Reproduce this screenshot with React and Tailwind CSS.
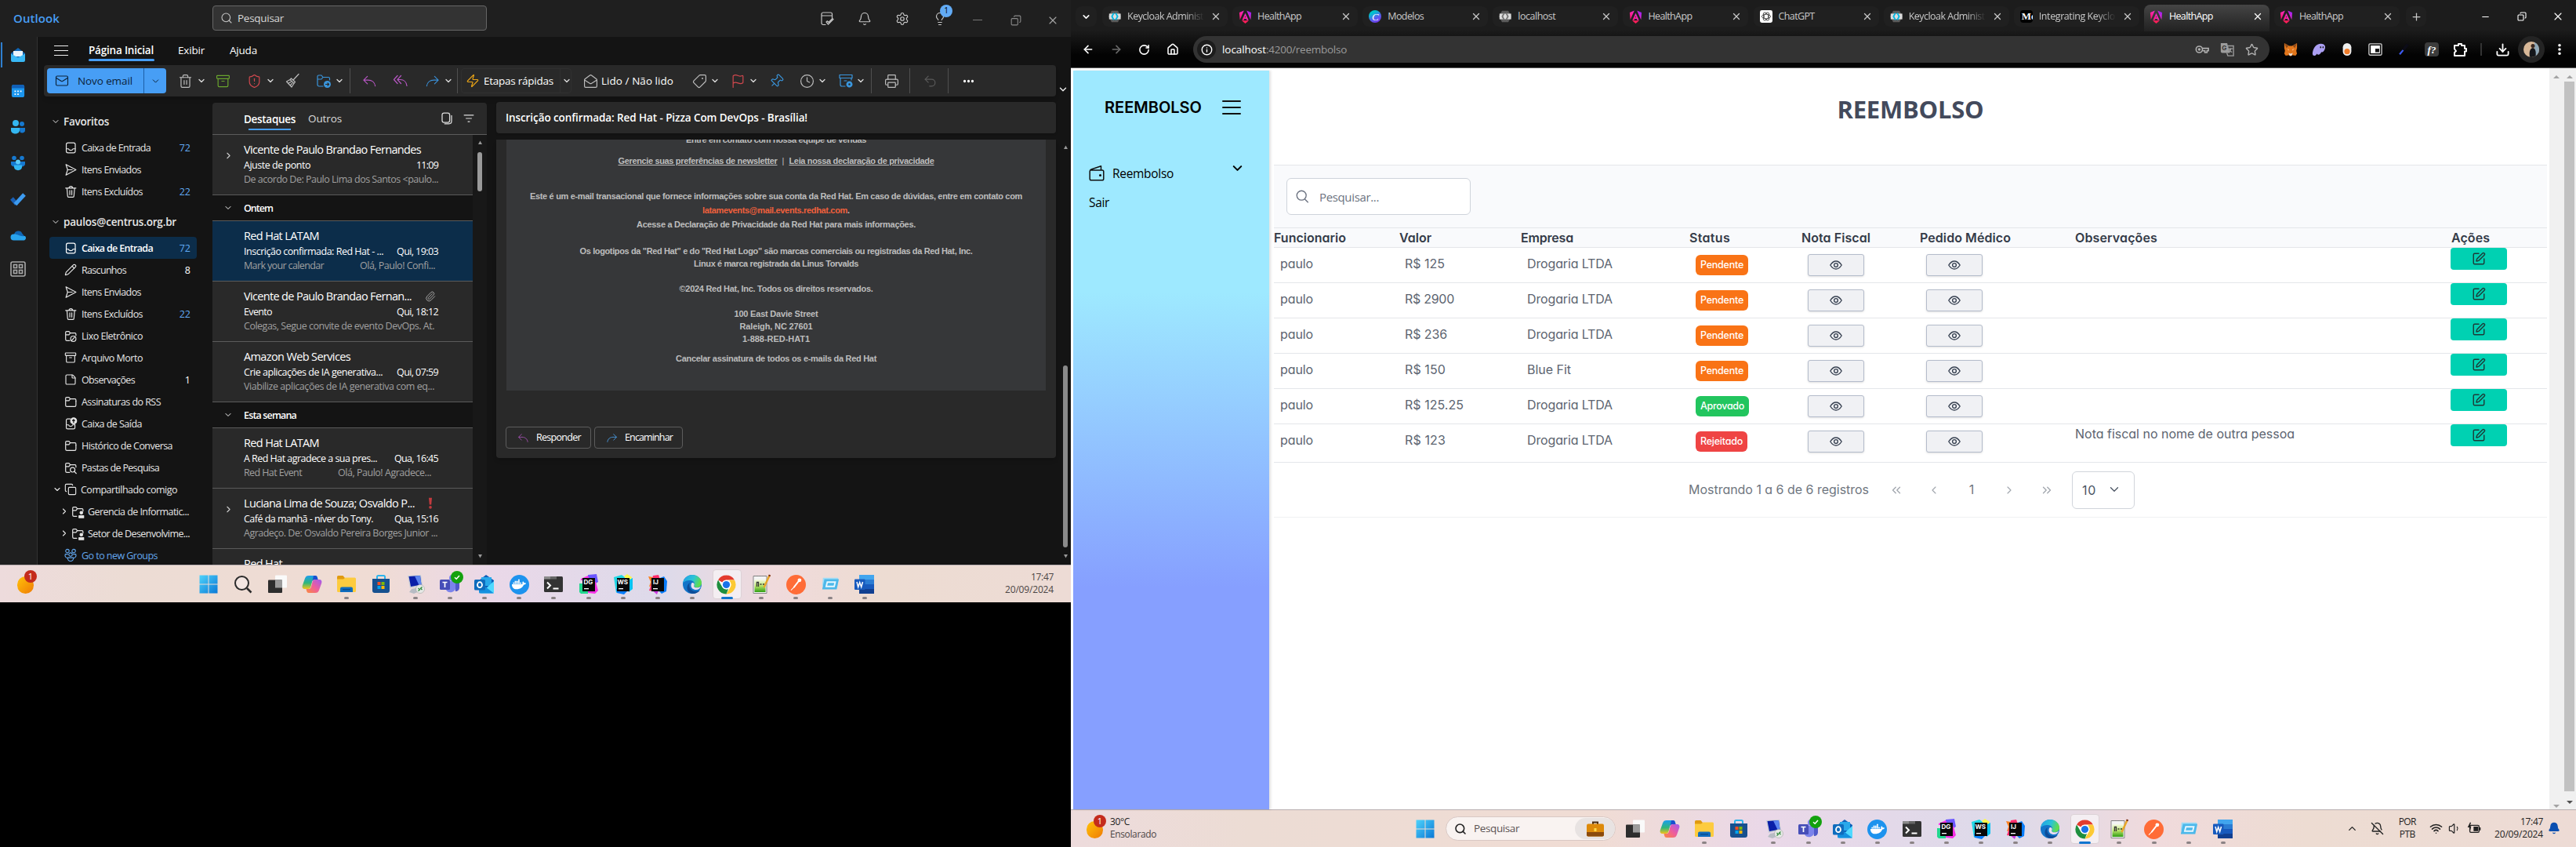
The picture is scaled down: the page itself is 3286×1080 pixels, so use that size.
import React, { useLayoutEffect, useRef, useState } from "react";
import {
  Trash2, Archive, ShieldAlert, Zap, MailOpen, Tag, Flag, Pin, Clock, Printer, Undo2, Ellipsis,
  Bell, Settings, Lightbulb, Pencil, StickyNote, Copy, ChevronDown, ChevronRight,
  ChevronLeft, ChevronUp, ChevronsLeft, ChevronsRight, X, Paperclip, Search, Star,
  Download, Wifi, Volume1, House, Info, RotateCw, ArrowLeft, ArrowRight, Mail,
  Plus, Minus, EllipsisVertical, SquarePen, BellOff,
} from "lucide-react";
import { FaDocker } from "react-icons/fa";

/* Text run whose tracking is adjusted so that it spans w pixels. */
function Fit({ w, className = "", children }) {
  const ref = useRef(null);
  const [ls, setLs] = useState(0);
  useLayoutEffect(() => {
    const n = String(children).length;
    const natural = ref.current.getBoundingClientRect().width;
    setLs((w - natural) / n);
  }, [w, children]);
  return (
    <span ref={ref} className={"inline-block shrink-0 whitespace-pre " + className} style={{ letterSpacing: ls + "px" }}>
      {children}
    </span>
  );
}

const Svg = ({ s = 20, vb = 20, className = "", children, ...p }) => (
  <svg width={s} height={s} viewBox={`0 0 ${vb} ${vb}`} fill="none" className={"shrink-0 " + className} {...p}>
    {children}
  </svg>
);

/* ---------- Small line icons ---------- */
const line = { stroke: "currentColor", strokeWidth: 1.2, strokeLinecap: "round", strokeLinejoin: "round" };
const ReplyIcon = ({ s = 20 }) => <Svg s={s} {...line}><path d="M7 3.5 2 8.5l5 5M2.3 8.5H8c5 0 9 3 9.500 8" /></Svg>;
const ReplyAllIcon = () => <Svg {...line}><path d="M6 3.500 1.500 8.500l4.500 5M10.500 3.500 6 8.500l4.500 5M6.500 8.500H9.500c4.500 0 8 3 8.500 8" /></Svg>;
const ForwardIcon = ({ s = 20 }) => <Svg s={s} {...line}><path d="m13 3.500 5 5-5 5M17.700 8.500H12c-5 0-9 3-9.500 8" /></Svg>;
const BroomIcon = () => <Svg {...line}><path d="m18 1.500-6.500 7M8.500 7l5 4.500-1.500 2-5-5zM7 8.500 2.500 11l6.500 7 3-4.500M5 13l3-1.500M7.500 15.500l2-2" /></Svg>;
const FolderGo = () => <Svg {...line}><path d="M9 17H4a2 2 0 0 1-2-2V4.500A1.500 1.500 0 0 1 3.500 3H7l2 2.500h7A1.500 1.500 0 0 1 17.500 7v2M2 8h5l2-2.500" /><circle cx="14.500" cy="14.500" r="4.500" fill="#3a96dd" stroke="none" /><path stroke="#292929" d="M12.500 14.500h4m-1.500-1.500 1.500 1.500-1.500 1.500" /></Svg>;
const ArchiveGear = () => <Svg {...line}><path d="M2 2.500h16v4H2zM3 6.500V15a2 2 0 0 0 2 2h4M17 6.500V9M8 10h3" /><circle cx="14.500" cy="14.500" r="3" fill="#3a96dd" strokeDasharray="1.500 1" strokeWidth="2" /><circle cx="14.500" cy="14.500" r="1.200" fill="#292929" stroke="none" /></Svg>;
const DayCheck = () => <Svg s={20} {...line}><path d="M8 17.500H5a2 2 0 0 1-2-2V4a2 2 0 0 1 2-2h9.500a2 2 0 0 1 2 2v5M3 6h13.500M9 14l2.500 3L18 10.500M9 14l1.500-1.200 1.500 1.700L17 9.500" /></Svg>;
const InboxIc = () => <Svg s={17} {...line} strokeWidth="1.400"><rect x="3" y="2.500" width="13.500" height="15" rx="2.500" /><path d="M3 11.500h3.500c.5 3 6 3 6.500 0h3.500" /></Svg>;
const SentIc = () => <Svg s={17} {...line} strokeWidth="1.400"><path d="m2.500 2 15 8-15 8 2.500-8zM5 10h7" /></Svg>;
const TrashIc = () => <Svg s={17} {...line} strokeWidth="1.400"><path d="M2 4.500h15.500M7 4.500c0-3.500 5.500-3.500 5.500 0M4 4.500l1 12a1.500 1.500 0 0 0 1.500 1.500H13a1.500 1.500 0 0 0 1.500-1.500l1-12M8.300 8v6.500M11.300 8v6.500" /></Svg>;
const GroupsIc = () => <Svg s={18} {...line}><circle cx="5.500" cy="4" r="2.500" /><circle cx="14.500" cy="4" r="2.500" /><circle cx="10" cy="9" r="2.500" /><path d="M6 8.500H2.500c-1 3 1 5 3 5.500M14 8.500h3.500c1 3-1 5-3 5.500M6 13.500h8c1 6.500-9 6.500-8 0z" /></Svg>;
const FolderIc = ({ kind }) => (
  <Svg s={17} {...line} strokeWidth="1.400">
    <path d="M8 17H4a2 2 0 0 1-2-2V4.500A1.500 1.500 0 0 1 3.500 3H7l2 2.500h7A1.500 1.500 0 0 1 17.500 7v2M2 8h5l2-2.500" />
    {kind === "junk" && <><circle cx="13.500" cy="14" r="4" /><path d="m11 17 5-6" /></>}
    {kind === "search" && <><circle cx="12.500" cy="13" r="3.500" /><path d="m15 15.500 3 3" /></>}
    {kind === "user" && <><circle cx="15" cy="11.500" r="2" fill="currentColor" /><path d="M11.500 16h7v3h-7z" fill="currentColor" /></>}
    {!kind && <path d="M8 17h7.500a2 2 0 0 0 2-2V9" />}
  </Svg>
);
const OutboxIc = () => <Svg s={17} {...line} strokeWidth="1.400"><path d="M9 2.500H5a2 2 0 0 0-2 2v11a2 2 0 0 0 2 2h9a2 2 0 0 0 2-2V11M3 11.500h3.500c.5 3 5.500 3 6 0H16" /><circle cx="14" cy="5.500" r="4.500" fill="currentColor" /><path stroke="#141414" d="M14 8V3.500m-1.500 1.500L14 3.500 15.500 5" /></Svg>;

const Sep = ({ className }) => <div className={"h-8 w-px shrink-0 bg-[#4f4f4f] " + className} />;
const Chev = ({ className = "" }) => <ChevronDown size={12} strokeWidth={2.600} className={"-mr-0.5 shrink-0 text-[#dcdcdc] " + className} />;

/* ---------- Application icons (taskbar) ---------- */
const WinIcon = () => <Svg s={24} vb={24}><defs><linearGradient id="win" x1="0" y1="0" x2="1" y2="1"><stop stopColor="#4fd3fb" /><stop offset="1" stopColor="#0a78d6" /></linearGradient></defs><path fill="url(#win)" d="M.5.500h11v11H.5zM12.500.500h11v11h-11zM.5 12.500h11v11H.5zM12.500 12.500h11v11h-11z" /></Svg>;
const TaskView = () => <Svg s={24} vb={24}><rect x="9" y=".5" width="15" height="16" rx="1" fill="#fafafa" /><rect x="0" y="6.500" width="18" height="16.500" rx="1" fill="#2d2d2d" /><rect x="9" y="6.500" width="9" height="10" fill="#9b9b9b" /></Svg>;
const Copilot = () => <Svg s={26} vb={26}><defs><linearGradient id="cpa" x1="0" y1="0" x2="0" y2="1"><stop stopColor="#1b9df0" /><stop offset=".55" stopColor="#2fb67c" /><stop offset="1" stopColor="#f3c31b" /></linearGradient><linearGradient id="cpb" x1="1" y1="0" x2="0" y2="1"><stop stopColor="#a05cf0" /><stop offset=".5" stopColor="#ee5d9c" /><stop offset="1" stopColor="#fb8b3c" /></linearGradient></defs><path fill="url(#cpa)" d="M9 2h8c2 0 2.500 1 3 3l.5 2h-4c-2 0-3 1-3.500 3l-1.500 6c-.6 2-1.500 3-3.500 3H4c-3 0-4-2-3-5L4 5.500C5 3 6 2 9 2z" /><path fill="#1b4fd0" d="M15 2h2c2 0 2.500 1 3 3l.5 2h-4c-1.500 0-2.500.7-3 2z" /><path fill="url(#cpb)" d="M17 24H9c-2 0-2.500-1-3-3l-.5-2h3c2 0 3-1 3.500-3l1.500-6c.6-2 1.500-3 3.500-3h5c3 0 4 2 3 5l-3 8.500c-1 2.500-2 3.500-5 3.500z" /></Svg>;
const Explorer = () => <Svg s={26} vb={26}><path fill="#e09a10" d="M1 3.500A1.500 1.500 0 0 1 2.500 2h6L11 5v4H1z" /><path fill="#fdcb3f" d="M1 6.500 9 6.500 11.500 4.500H23.500A1.500 1.500 0 0 1 25 6v15.500a1.500 1.500 0 0 1-1.500 1.500H2.500A1.500 1.500 0 0 1 1 21.500z" /><path fill="#0f6cbf" d="M5 23v-4.500a2 2 0 0 1 2-2h12a2 2 0 0 1 2 2V23z" /><rect x="8" y="19" width="10" height="1.500" fill="#0a4c8e" /></Svg>;
const Store = () => <Svg s={26} vb={26}><path d="M8 7V3.500A1.500 1.500 0 0 1 9.500 2h7A1.500 1.500 0 0 1 18 3.500V7" stroke="#2db4ec" strokeWidth="2" /><path fill="#17518f" d="M2 6h22v15a3 3 0 0 1-3 3H5a3 3 0 0 1-3-3z" /><path fill="#f25022" d="M8.500 10h4v4h-4z" /><path fill="#7fba00" d="M13.500 10h4v4h-4z" /><path fill="#00a4ef" d="M8.500 15h4v4h-4z" /><path fill="#ffb900" d="M13.500 15h4v4h-4z" /></Svg>;
const Rdp = () => <Svg s={26} vb={26}><path fill="#c9ced6" d="m3 2 17-1 2 14-16 3z" /><path fill="#0a1fa8" d="m4.500 3 14.500-1 1.500 11.500L7 16z" /><path fill="#5d86f0" d="m12 2.500 7-.5 1.500 11.500-3 .500z" /><path fill="#b7bcc4" d="m8 19 10-2 2 4-9 4-6-2z" /><circle cx="19" cy="19" r="5.500" fill="#e6e9e6" stroke="#9a9a9a" strokeWidth=".5" /><path stroke="#2f8a3a" strokeWidth="1.300" d="m16.500 18 2 1.800-2 1.800M21.500 16.500l-2 1.700 2 1.800" /></Svg>;
const Teams = () => <Svg s={28} vb={28}><circle cx="17" cy="6" r="4" fill="#7b83eb" /><path fill="#5059c9" d="M19 10h7v8c0 3-2 5-5 5z" /><path fill="#7b83eb" d="M9 10h12v9a6.500 6.500 0 0 1-12 2z" /><rect x="1" y="8" width="13" height="13" rx="1.500" fill="#464eb8" /><path stroke="#fff" strokeWidth="1.700" d="M4.500 11.500h6M7.500 11.500V18" /></Svg>;
const OutlookIc = () => <Svg s={26} vb={26}><path fill="#0f5fb8" d="m6 8 9-7 10 7v15H6z" /><path fill="#28a8ea" d="M9 4h13v11H9z" /><path fill="#50d9ff" d="M25 9v14a1.500 1.500 0 0 1-1.500 1.500H8z" /><path fill="#1490df" d="m6 10 19 14.500H7.500A1.500 1.500 0 0 1 6 23z" /><rect x="0" y="7" width="14" height="13.500" rx="1.500" fill="#0f6cbd" /><ellipse cx="7" cy="13.700" rx="3" ry="3.500" stroke="#fff" strokeWidth="1.800" /></Svg>;
const DockerIc = () => <div className="flex h-[25px] w-[25px] items-center justify-center rounded-full bg-[#1d93ee] text-white"><FaDocker size={18} /></div>;
const Terminal = () => <Svg s={24} vb={24}><rect y="2" width="24" height="20" rx="1.500" fill="#333" /><path fill="#8b8b8b" d="M0 3.500A1.500 1.500 0 0 1 1.500 2H8v3.500H0z" /><path fill="#666" d="M8 2h8v3.500H8z" /><path stroke="#fff" strokeWidth="2" d="m4 9.500 4 4-4 4M11.500 17.500h7" /></Svg>;
/* JetBrains products: coloured plates behind a black square with the product's initials */
const DataGrip = () => <Svg s={26} vb={26}><path fill="#22d88f" d="M1 12h11v13H3l-2-2z" /><path fill="#6b57ff" d="m12 1 11-1 2 10-5 3-8-4z" /><path fill="#f531e6" d="M3 6 12 2l2 5 8 3 3 11-4 4-9-1V8H3z" /><rect x="5" y="5" width="16" height="17" fill="#080808" /><text x="6.500" y="13" fill="#fff" fontSize="8" fontWeight="700" fontFamily="Inter, sans-serif">DG</text><path fill="#fff" d="M7 18h6v1.300H7z" /></Svg>;
const WebStorm = () => <Svg s={26} vb={26}><path fill="#21d7e4" d="m1 4 10-3 4 3-3 14-8 6z" /><path fill="#fcf84a" d="m14 3 4-3 6 4-2 5-5-3z" /><path fill="#07c3f2" d="m19 8 6-3v14l-5 4z" /><path fill="#087cfa" d="m4 19 16 1-6 6-9-2z" /><rect x="5" y="5" width="16" height="17" fill="#080808" /><text x="5.500" y="13" fill="#fff" fontSize="8" fontWeight="700" fontFamily="Inter, sans-serif">WS</text><path fill="#fff" d="M7 18h6v1.300H7z" /></Svg>;
const IntelliJ = () => <Svg s={26} vb={26}><path fill="#fc801d" d="m1 3 6 1 2 10-7 2 2-6z" /><path fill="#ff2d6b" d="m7 2 7-1 2 6-6 15-8-1 2-6z" /><path fill="#087cfa" d="m16 5 5-2 4 6-1 13-6 3-3-3z" /><path fill="#c93ae0" d="m5 20 9 1-2 5z" /><rect x="5" y="5" width="16" height="17" fill="#080808" /><text x="7" y="13" fill="#fff" fontSize="8" fontWeight="700" fontFamily="Inter, sans-serif">IJ</text><path fill="#fff" d="M7 18h6v1.300H7z" /></Svg>;
const Edge = () => <Svg s={26} vb={26}><defs><linearGradient id="eda" x1="0" y1="0" x2="1" y2=".3"><stop stopColor="#1f9fe8" /><stop offset=".6" stopColor="#2cc3d6" /><stop offset="1" stopColor="#5fdc50" /></linearGradient></defs><circle cx="13" cy="13" r="12" fill="#1374c8" /><path fill="url(#eda)" d="M1 12C2 5 7 1 13 1c7 0 12 5 12 10 0 4-3 6-6 6-4 0-4-1.500-3.500-2.500C17 12 15 8 10.500 8 6 8 2 9.500 1 12z" /><path fill="#0d4c98" d="M10 11c-2 4 0 11 8 11 2 0 4-.7 5-1.500-2 3-6 4.800-10 4.500-5-1-7-5-6.500-8.500C7 13.500 8.500 12 10 11z" /><path fill="#ecdff0" d="M13 11c3 0 3 2.500 2.300 3.700-.8 1.300 1 2.800 4 2.600 2 0 3.700-.8 4.700-1.800-.5 2.500-3 4.500-6 4.500-4 0-6.500-2.500-6.500-5.500 0-1.500.5-3 1.500-3.500z" /></Svg>;
const Chrome = () => <Svg s={25} vb={24}><circle cx="12" cy="12" r="11.500" fill="#fff" /><path fill="#e33b2e" d="M12 .500a11.500 11.500 0 0 1 10 5.750H12a5.750 5.750 0 0 0-5 2.900L2 6.250A11.500 11.500 0 0 1 12 .500z" /><path fill="#fcc934" d="M22 6.250A11.500 11.500 0 0 1 12 23.500l5-8.600a5.750 5.750 0 0 0 0-5.800l-1.500-2.850z" /><path fill="#1e8e3e" d="M2 6.250 7 14.900a5.750 5.750 0 0 0 5 2.850c1 0 1.500-.1 2.500-.5L12 23.500A11.500 11.500 0 0 1 2 6.250z" /><circle cx="12" cy="12" r="5.500" fill="#fff" /><circle cx="12" cy="12" r="4.400" fill="#1a73e8" /></Svg>;
const Npp = () => <Svg s={26} vb={26}><defs><linearGradient id="npp" x1="0" y1="0" x2="0" y2="1"><stop stopColor="#f7fbe8" /><stop offset=".5" stopColor="#b8e36a" /><stop offset="1" stopColor="#2f9e12" /></linearGradient></defs><path fill="#f4f4f4" stroke="#888" d="M3 2.500h17v22H3z" /><path fill="url(#npp)" d="M4.500 7h14v16h-14z" /><path stroke="#333" strokeWidth="1.300" d="M7.500 16v-5.500h2V16M11.500 13h2m1.500 0h2" /><path stroke="#777" strokeDasharray="1 1" d="M4 2.500h15" /><path stroke="#e8a628" strokeWidth="2.500" d="m23.500 2-7 15" /><path stroke="#7a2c10" strokeWidth="2.500" d="m24 1-.8 1.800" /></Svg>;
const Postman = () => <Svg s={25} vb={24}><circle cx="12" cy="12" r="12" fill="#ff6c37" /><circle cx="16.200" cy="6.500" r="2.300" fill="#fff" /><path stroke="#fff" strokeWidth="1.800" strokeLinecap="round" d="m14.500 8.500-5 6.500" /><path stroke="#fff" strokeWidth="1" strokeLinecap="round" d="m9.500 15-3.500 3.500" /></Svg>;
const Vm = () => <Svg s={24} vb={26}><path fill="#9edcf7" d="M3 4h21l-1 11H2z" /><path fill="#4cb8ea" d="M5 6h20l-3 14H2z" /><path stroke="#e7f7ff" strokeWidth="2" d="M9 10h11l-1.500 6H7.500z" /></Svg>;
const Word = () => <Svg s={26} vb={26}><path fill="#41a5ee" d="M6 1h19v6H6z" /><path fill="#2b7cd3" d="M6 7h19v6H6z" /><path fill="#185abd" d="M6 13h19v6H6z" /><path fill="#103f91" d="M6 19h19v6H6z" /><rect x="0" y="6.500" width="13.500" height="13.500" rx="1" fill="#185abd" /><path stroke="#fff" strokeWidth="1.500" d="m3 10 1.700 6.500 2-6 2 6L10.500 10" /></Svg>;

const APPS = [
  [TaskView, false], [Copilot, false], [Explorer, true], [Store, false], [Rdp, true], [Teams, true],
  [OutlookIc, true], [DockerIc, true], [Terminal, true], [DataGrip, true], [WebStorm, true],
  [IntelliJ, true], [Edge, true], [Chrome, "on"], [Npp, true], [Postman, true], [Vm, true], [Word, true],
];

function Cell({ Icon, run, badge }) {
  return (
    <div className="relative flex h-12 w-[44.100px] shrink-0 items-center justify-center">
      {run === "on" && <div className="absolute top-[5px] left-1 h-[38px] w-[37px] rounded border border-[#dcd2d6] bg-[#f4eef2]" />}
      <div className="relative"><Icon /></div>
      {run === true && <div className="absolute bottom-[5px] left-[19px] h-[3px] w-1.5 rounded-full bg-[#8b8385]" />}
      {run === "on" && <div className="absolute bottom-[5px] left-[15px] h-[3px] w-[15px] rounded-full bg-[#0f74cf]" />}
      {badge && (
        <div className="absolute top-[7px] left-[23px] flex h-4 w-4 items-center justify-center rounded-full bg-[#13a10e] text-white">
          <Svg s={10} vb={10}><path d="m2 5.200 2.200 2L8 3" stroke="#fff" strokeWidth="1.500" /></Svg>
        </div>
      )}
    </div>
  );
}
const AppCells = () => APPS.map(([Icon, run], i) => <Cell key={i} Icon={Icon} run={run} badge={i === 5} />);

const BAR = "flex h-12 shrink-0 border-t border-[#b8aeb0] text-[12px] text-[#4c4646] bg-[linear-gradient(90deg,#eddbdc_0%,#ecdcd4_12%,#f0dcd4_35%,#ead8e8_46%,#dddaea_62%,#f0dadc_72%,#eddcd2_82%,#eddbd5_100%)]";

const Weather = () => (
  <div className="relative h-9 w-7 shrink-0">
    <div className="absolute top-2.5 left-0 h-[22px] w-[21px] rounded-full bg-gradient-to-br from-[#ffc20a] to-[#ee7a05]" />
    <div className="absolute top-0.5 left-[9px] flex h-4 w-4 items-center justify-center rounded-full bg-[#c42b1c] text-[11px] text-white">1</div>
  </div>
);

/* ---------- Outlook ---------- */
function TitleBar() {
  return (
    <div className="flex h-[47px] items-center bg-[#1f1f1f] pl-[17px] text-[#c8c8c8]">
      <Fit w={59} className="text-[15px] font-semibold text-[#479ef5]">Outlook</Fit>
      <div className="-mt-px ml-[195px] flex h-8 w-[350px] shrink-0 items-center rounded border border-[#666] bg-[#333] pl-[9px]">
        <Search size={16} strokeWidth={1.600} />
        <Fit w={59} className="ml-1.5 text-[13.500px] text-[#d6d6d6]">Pesquisar</Fit>
      </div>
      <div className="ml-[424px] flex"><DayCheck /></div>
      <Bell size={18} strokeWidth={1.600} className="ml-[29px] shrink-0" />
      <Settings size={18} strokeWidth={1.600} className="ml-[30px] shrink-0" />
      <div className="relative ml-[30px] shrink-0">
        <Lightbulb size={18} strokeWidth={1.600} />
        <div className="absolute -top-[9px] left-[9px] flex h-4 w-4 items-center justify-center rounded-full bg-[#62abf5] text-[10px] text-black">1</div>
      </div>
      <div className="mt-1 ml-[33px] h-[1.500px] w-3 shrink-0 bg-[#777]" />
      <Copy size={14} strokeWidth={1.900} className="mt-1 ml-9 shrink-0 -scale-x-100 text-[#888]" />
      <X size={16} strokeWidth={1.600} className="mt-1 ml-8 shrink-0 text-[#a5a5a5]" />
    </div>
  );
}

function Rail() {
  return (
    <div className="flex w-12 shrink-0 flex-col border-r border-[#333] bg-[#1f1f1f]">
      <div className="relative mt-[7px] flex h-8 items-center pl-[13px]">
        <div className="absolute left-px h-8 w-0.5 bg-[#2f7fd0]" />
        <Svg s={20}><path fill="#1066b5" d="M1 8 10 1l9 7v9H1z" /><path fill="#e8f4fd" d="M4 5h12v7H4z" /><path fill="#39b8f5" d="m1 8.500 9 5 9-5V17a2 2 0 0 1-2 2H3a2 2 0 0 1-2-2z" /></Svg>
      </div>
      <div className="mt-[14px] flex h-8 items-center pl-[14px]"><Svg s={18}><rect x="1" y="1" width="18" height="18" rx="3" fill="#1c96ee" /><path fill="#1160b7" d="M1 4a3 3 0 0 1 3-3h12a3 3 0 0 1 3 3v2H1z" /><path stroke="#fff" strokeWidth="2" strokeDasharray="2 2" d="M5 10.500h10M5 14.500h7" /></Svg></div>
      <div className="mt-[14px] flex h-8 items-center pl-[13px]"><Svg s={20}><circle cx="7" cy="5" r="4" fill="#34b7f1" /><circle cx="15" cy="6" r="3" fill="#1679d0" /><path fill="#1679d0" d="M11 11h8v3c0 3-3 4-6 3z" /><path fill="#34b7f1" d="M1 11h11v3c0 6-11 6-11 0z" /></Svg></div>
      <div className="mt-[14px] flex h-8 items-center pl-[13px]"><Svg s={20}><circle cx="5" cy="3.500" r="2.800" fill="#1679d0" /><circle cx="15" cy="3.500" r="2.800" fill="#1679d0" /><path fill="#1679d0" d="M1 8h18v3c0 3-4 4-9 4s-9-1-9-4z" /><circle cx="10" cy="8.500" r="3" fill="#5ccbf7" /><path fill="#34b7f1" d="M5 12.500h10V15c0 5.500-10 5.500-10 0z" /></Svg></div>
      <div className="mt-[14px] flex h-8 items-center pl-[13px]"><Svg s={20}><path stroke="#1a5fb4" strokeWidth="5" d="m2 9 6 7" /><path stroke="#3d9bf0" strokeWidth="5" d="M6.500 16.500 18 4" /></Svg></div>
      <div className="mt-[14px] flex h-8 items-center pl-[13px]"><Svg s={20}><path fill="#1066b5" d="M5 9a5.500 5.500 0 0 1 10.500-1L19 12H3z" /><path fill="#29a4ee" d="M4.500 16.500a4 4 0 0 1 0-8C9 8 12 12 19 11c2.500 3 0 5.500-2.500 5.500z" /></Svg></div>
      <div className="mt-[11px] flex h-8 items-center pl-[13px] text-[#a9a9a9]"><Svg s={20} stroke="currentColor" strokeWidth="1.600"><rect x="1" y="1" width="18" height="18" rx="2" /><rect x="4.500" y="4.500" width="4" height="4" /><rect x="11.500" y="4.500" width="4" height="4" /><rect x="4.500" y="11.500" width="4" height="4" /><rect x="11.500" y="11.500" width="4" height="4" /></Svg></div>
    </div>
  );
}

function Ribbon() {
  const ic = { size: 19, strokeWidth: 1.500 };
  const box = "flex w-5 shrink-0 justify-center ";
  return (
    <div className="flex h-10 pl-2">
      <div className="flex h-10 w-[1291px] shrink-0 items-center rounded bg-[#292929] pl-1 text-[#bdbdbd] shadow-md">
        <div className="flex h-8 w-[124px] shrink-0 items-center rounded-l border-r border-[#1d5fa6] bg-[#479ef5] pl-2.5 text-[#0c2238]">
          <Mail size={18} strokeWidth={1.500} />
          <Fit w={70} className="ml-[11px] text-[13.500px]">Novo email</Fit>
        </div>
        <div className="flex h-8 w-7 shrink-0 items-center justify-center rounded-r bg-[#479ef5] text-[#0c2238]"><ChevronDown size={13} strokeWidth={1.800} /></div>
        <div className={box + "ml-[14px]"}><Trash2 {...ic} /></div>
        <Chev className="ml-[5px]" />
        <div className={box + "ml-[13px] text-[#6aa52e]"}><Archive {...ic} /></div>
        <div className={box + "ml-5 text-[#d1484e]"}><ShieldAlert {...ic} /></div>
        <Chev className="ml-[5px]" />
        <div className={box + "ml-[14px]"}><BroomIcon /></div>
        <div className={box + "ml-5 text-[#3a96dd]"}><FolderGo /></div>
        <Chev className="ml-1" />
        <Sep className="ml-[9px]" />
        <div className={box + "ml-[14px] text-[#b757c4]"}><ReplyIcon s={19} /></div>
        <div className={box + "ml-5 text-[#b757c4]"}><ReplyAllIcon /></div>
        <div className={box + "ml-5 text-[#3a90d8]"}><ForwardIcon s={19} /></div>
        <Chev className="ml-[5px]" />
        <Sep className="ml-[7px]" />
        <div className="ml-1 flex h-8 w-[141px] shrink-0 items-center rounded border border-[#303030] pl-[5px] text-white">
          <Zap size={18} strokeWidth={1.600} className="text-[#e8a317]" />
          <Fit w={89} className="ml-[5px] pt-px text-[13.500px] font-medium">Etapas rápidas</Fit>
          <div className="ml-2 h-8 w-px bg-[#303030]" />
          <Chev className="ml-0.5" />
        </div>
        <div className={box + "ml-[14px]"}><MailOpen {...ic} /></div>
        <Fit w={92} className="ml-1 text-[13.500px] font-medium text-white">Lido / Não lido</Fit>
        <div className={box + "ml-[23px]"}><Tag {...ic} className="rotate-90" /></div>
        <Chev className="ml-1" />
        <div className={box + "ml-[15px] text-[#d1484e]"}><Flag {...ic} /></div>
        <Chev className="ml-1" />
        <div className={box + "ml-[15px] text-[#3a96dd]"}><Pin {...ic} className="rotate-45" /></div>
        <div className={box + "ml-[19px]"}><Clock {...ic} /></div>
        <Chev className="ml-1" />
        <div className={box + "ml-4 text-[#3a96dd]"}><ArchiveGear /></div>
        <Chev className="ml-[3px]" />
        <Sep className="ml-[9px]" />
        <div className={box + "ml-[15px]"}><Printer {...ic} /></div>
        <Sep className="ml-[13px]" />
        <div className={box + "ml-[15px] text-[#5a5a5a]"}><Undo2 {...ic} /></div>
        <Sep className="ml-[13px]" />
        <div className={box + "ml-[15px] text-white"}><Ellipsis size={17} strokeWidth={2.600} /></div>
      </div>
      <ChevronDown size={14} strokeWidth={2.400} className="mt-6 ml-0.5 text-[#eee]" />
    </div>
  );
}

const st = { size: 16, strokeWidth: 1.700 };
const FAVS = [
  [<InboxIc />, "Caixa de Entrada", 88, "72"],
  [<SentIc />, "Itens Enviados", 76],
  [<TrashIc />, "Itens Excluídos", 78, "22"],
];
const FOLDERS = [
  [<InboxIc />, "Caixa de Entrada", 91, "72"],
  [<Pencil {...st} />, "Rascunhos", 57, "8", "w"],
  [<SentIc />, "Itens Enviados", 76],
  [<TrashIc />, "Itens Excluídos", 78, "22"],
  [<FolderIc kind="junk" />, "Lixo Eletrônico", 78],
  [<Archive {...st} />, "Arquivo Morto", 78],
  [<StickyNote {...st} />, "Observações", 68, "1", "w"],
  [<FolderIc />, "Assinaturas do RSS", 101],
  [<OutboxIc />, "Caixa de Saída", 77],
  [<FolderIc />, "Histórico de Conversa", 116],
  [<FolderIc kind="search" />, "Pastas de Pesquisa", 99],
];
function FolderRow({ row, sel }) {
  const [icon, name, w, n, tone] = row;
  return (
    <div className={"ml-[15px] flex h-7 w-[188px] items-center rounded pl-[19px] pr-2 text-[12.500px] text-[#e6e6e6] " + (sel ? "bg-[#0c2d4a] font-semibold text-white" : "")}>
      <div className="flex w-[17px]">{icon}</div>
      <Fit w={w} className="ml-[5px] pt-0.5">{name}</Fit>
      {n && <span className={"ml-auto pt-0.5 text-[12.500px] font-normal " + (tone ? "text-white" : "text-[#62abf5]")}>{n}</span>}
    </div>
  );
}
function Folders() {
  return (
    <div className="w-[223px] shrink-0 pt-4 text-[#e6e6e6]">
      <div className="mb-1 flex h-[31px] items-center pl-[17px]">
        <ChevronDown size={12} strokeWidth={2} />
        <Fit w={58} className="ml-1 pt-0.5 text-[13.500px] font-semibold">Favoritos</Fit>
      </div>
      {FAVS.map((r, i) => <FolderRow key={i} row={r} />)}
      <div className="flex h-11 items-center pt-1.5 pl-[17px]">
        <ChevronDown size={12} strokeWidth={2} />
        <Fit w={144} className="ml-1 pt-px text-[13.500px] font-semibold">paulos@centrus.org.br</Fit>
      </div>
      {FOLDERS.map((r, i) => <FolderRow key={i} row={r} sel={i === 0} />)}
      <div className="flex h-7 items-center pl-[19px] text-[12.500px]">
        <ChevronDown size={12} strokeWidth={2.200} />
        <Copy size={16} strokeWidth={1.700} className="ml-[3px]" />
        <Fit w={123} className="ml-[5px] pt-0.5">Compartilhado comigo</Fit>
      </div>
      {[["Gerencia de Informatic...", 129], ["Setor de Desenvolvime...", 130]].map(([t, w]) => (
        <div key={t} className="flex h-7 items-center pl-7 text-[12.500px]">
          <ChevronRight size={12} strokeWidth={2.200} />
          <div className="ml-[3px] flex"><FolderIc kind="user" /></div>
          <Fit w={w} className="ml-1 pt-0.5">{t}</Fit>
        </div>
      ))}
      <div className="flex h-7 items-center pl-[33px] text-[12.500px] text-[#62a6ec]">
        <GroupsIc />
        <Fit w={97} className="ml-[5px] pt-0.5">Go to new Groups</Fit>
      </div>
    </div>
  );
}

function Message({ from, fw, subj, sw, time, tw, pre, pw, pre2, p2w, sel, thread, mark }) {
  return (
    <div className={"flex h-[77px] border-b border-[#5a5a5a] " + (sel ? "bg-[#0c2d4a]" : "bg-[#292929]")}>
      <div className="w-10 shrink-0 pt-5 pl-[14px] text-[#ccc]">{thread && <ChevronRight size={13} strokeWidth={2} />}</div>
      <div className="w-[248px] pt-[7px]">
        <div className="flex h-[23px] items-center justify-between">
          <Fit w={fw} className="text-[14.500px] text-white">{from}</Fit>
          {mark === "clip" && <Paperclip size={14} strokeWidth={1.700} className="mr-[3px] text-[#a5a5a5]" />}
          {mark === "bang" && <Svg s={16} className="mr-0.5"><path fill="#c23a3e" d="M7.500 1h5l-1 11h-3z" /><circle cx="10" cy="16" r="2.300" fill="#c23a3e" /></Svg>}
        </div>
        {subj && (
          <div className="flex h-[18px] items-center justify-between text-[12.500px] text-white">
            <Fit w={sw}>{subj}</Fit>
            <Fit w={tw}>{time}</Fit>
          </div>
        )}
        {pre && (
          <div className="flex h-[18px] items-center text-[12.500px] text-[#a0a0a0]">
            <Fit w={pw}>{pre}</Fit>
            {pre2 && <Fit w={p2w} className="ml-[46px]">{pre2}</Fit>}
          </div>
        )}
      </div>
    </div>
  );
}
const Group = ({ t, w }) => (
  <div className="flex h-[33px] items-center border-b border-[#5a5a5a] bg-[#141414] pl-[14px] text-white">
    <ChevronDown size={12} strokeWidth={1.900} />
    <Fit w={w} className="ml-[14px] pt-0.5 text-[12.500px] font-semibold">{t}</Fit>
  </div>
);

function MessageList() {
  return (
    <div className="flex w-[350px] shrink-0 flex-col pt-2">
      <div className="flex h-[41px] shrink-0 items-center rounded-t border-b border-[#5c5c5c] bg-[#292929] pl-10 text-[#ddd]">
        <div className="relative">
          <Fit w={66} className="text-[13.500px] font-semibold text-white">Destaques</Fit>
          <div className="absolute -bottom-[3px] left-1.5 h-0.5 w-[54px] bg-[#479ef5]" />
        </div>
        <Fit w={43} className="ml-4 text-[13.500px]">Outros</Fit>
        <Svg s={16} className="ml-[126px]" stroke="currentColor" strokeWidth="1.600"><rect x="2.500" y="1.500" width="12" height="15" rx="3" /><path d="M6 18.500h7.500a4 4 0 0 0 4-4V5" /></Svg>
        <Svg s={14} className="ml-[13px]" stroke="currentColor" strokeWidth="1.700"><path d="M1 4h18M4.500 10h11M8 16h4" /></Svg>
      </div>
      <div className="flex min-h-0 flex-1 overflow-hidden">
        <div className="w-[332px] shrink-0">
          <Message thread from="Vicente de Paulo Brandao Fernandes" fw={226} subj="Ajuste de ponto" sw={85} time="11:09" tw={28} pre="De acordo De: Paulo Lima dos Santos <paulo..." pw={248} />
          <Group t="Ontem" w={37} />
          <Message sel from="Red Hat LATAM" fw={96} subj="Inscrição confirmada: Red Hat - ..." sw={178} time="Qui, 19:03" tw={53} pre="Mark your calendar" pw={102} pre2="Olá, Paulo! Confi..." p2w={96} />
          <Message from="Vicente de Paulo Brandao Fernan..." fw={214} mark="clip" subj="Evento" sw={36} time="Qui, 18:12" tw={53} pre="Colegas, Segue convite de evento DevOps. At." pw={243} />
          <Message from="Amazon Web Services" fw={136} subj="Crie aplicações de IA generativa..." sw={177} time="Qui, 07:59" tw={53} pre="Viabilize aplicações de IA generativa com eq..." pw={243} />
          <Group t="Esta semana" w={67} />
          <Message from="Red Hat LATAM" fw={96} subj="A Red Hat agradece a sua pres..." sw={170} time="Qua, 16:45" tw={56} pre="Red Hat Event" pw={74} pre2="Olá, Paulo! Agradece..." p2w={119} />
          <Message thread mark="bang" from="Luciana Lima de Souza; Osvaldo P..." fw={218} subj="Café da manhã - níver do Tony." sw={165} time="Qua, 15:16" tw={56} pre="Agradeço. De: Osvaldo Pereira Borges Junior ..." pw={247} />
          <Message from="Red Hat" fw={49} />
        </div>
        <div className="flex w-[18px] shrink-0 flex-col items-center bg-[#181818]">
          <Svg s={5} vb={5} className="mt-[7px]"><path fill="#999" d="M0 5 2.500.500 5 5z" /></Svg>
          <div className="mt-[10px] h-[50px] w-1.5 rounded-full bg-[#9a9a9a]" />
          <Svg s={5} vb={5} className="mt-auto mb-2"><path fill="#999" d="M0 0h5L2.500 4.500z" /></Svg>
        </div>
      </div>
    </div>
  );
}

function ReadingPane() {
  const L = "flex h-4 justify-center";
  const T = "flex h-[18px] justify-center";
  return (
    <div className="ml-3 w-[714px] shrink-0 pt-[7px]">
      <div className="flex h-10 items-center rounded bg-[#292929] pl-3 text-white shadow">
        <Fit w={385} className="pt-px text-[13.500px] font-semibold">Inscrição confirmada: Red Hat - Pizza Com DevOps - Brasília!</Fit>
      </div>
      <div className="mt-2 h-[406px] rounded-b bg-[#292929] px-[13px] shadow-md">
        <div className="h-80 overflow-hidden bg-[#363739] font-['Liberation_Sans',sans-serif] text-[11px] leading-[17px] font-bold text-[#bdbdbd]">
          <div className={T + " -mt-2"}><Fit w={230}>Entre em contato com nossa equipe de vendas</Fit></div>
          <div className={T + " mt-[9px]"}>
            <Fit w={203} className="underline">Gerencie suas preferências de newsletter</Fit>
            <span className="w-[15px] text-center font-normal">|</span>
            <Fit w={185} className="underline">Leia nossa declaração de privacidade</Fit>
          </div>
          <div className={T + " mt-[27px]"}><Fit w={628}>Este é um e-mail transacional que fornece informações sobre sua conta da Red Hat. Em caso de dúvidas, entre em contato com</Fit></div>
          <div className={T}><Fit w={185} className="text-[#f0603c]">latamevents@mail.events.redhat.com</Fit>.</div>
          <div className={T}><Fit w={356}>Acesse a Declaração de Privacidade da Red Hat para mais informações.</Fit></div>
          <div className={L + " mt-4"}><Fit w={501}>Os logotipos da "Red Hat" e do "Red Hat Logo" são marcas comerciais ou registradas da Red Hat, Inc.</Fit></div>
          <div className={L}><Fit w={210}>Linux é marca registrada da Linus Torvalds</Fit></div>
          <div className={L + " mt-4"}><Fit w={247}>©2024 Red Hat, Inc. Todos os direitos reservados.</Fit></div>
          <div className={L + " mt-4"}><Fit w={107}>100 East Davie Street</Fit></div>
          <div className={L}><Fit w={93}>Raleigh, NC 27601</Fit></div>
          <div className={L}><Fit w={86}>1-888-RED-HAT1</Fit></div>
          <div className={L + " mt-[9px]"}><Fit w={256}>Cancelar assinatura de todos os e-mails da Red Hat</Fit></div>
        </div>
        <div className="mt-[46px] -ml-px flex gap-1 text-[12.500px] font-medium text-white">
          <div className="flex h-7 w-[109px] items-center rounded border border-[#5c5c5c] pl-[14px]">
            <span className="text-[#a04fae]"><ReplyIcon s={15} /></span><Fit w={57} className="ml-[9px] pt-px">Responder</Fit>
          </div>
          <div className="flex h-7 w-[113px] items-center rounded border border-[#5c5c5c] pl-[14px]">
            <span className="text-[#4a9ae0]"><ForwardIcon s={15} /></span><Fit w={61} className="ml-[9px] pt-px">Encaminhar</Fit>
          </div>
        </div>
      </div>
    </div>
  );
}

function Outlook() {
  return (
    <div className="flex h-[720px] w-[1366px] flex-col overflow-hidden bg-[#141414]">
      <TitleBar />
      <div className="flex min-h-0 flex-1">
        <Rail />
        <div className="flex flex-1 flex-col">
          <div className="flex h-9 items-center pl-[21px] text-[13.500px] text-white">
            <div className="flex w-[18px] flex-col gap-[5px] pb-px"><i className="h-px bg-[#eee]" /><i className="h-px bg-[#eee]" /><i className="h-px bg-[#eee]" /></div>
            <div className="relative ml-[26px] -mt-0.5">
              <Fit w={83} className="font-semibold">Página Inicial</Fit>
              <div className="absolute -bottom-1 left-0 h-[3px] w-[84px] rounded-full bg-[#479ef5]" />
            </div>
            <Fit w={34} className="-mt-0.5 ml-[31px]">Exibir</Fit>
            <Fit w={35} className="-mt-0.5 ml-8">Ajuda</Fit>
          </div>
          <Ribbon />
          <div className="flex min-h-0 flex-1">
            <Folders />
            <MessageList />
            <ReadingPane />
            <div className="flex flex-1 flex-col items-center pl-[5px]">
              <Svg s={5} vb={5} className="mt-[62px]"><path fill="#999" d="M0 5 2.500.500 5 5z" /></Svg>
              <div className="mt-[276px] h-[232px] w-1.5 rounded-full bg-[#8a8a8a]" />
              <Svg s={5} vb={5} className="mt-auto mb-2"><path fill="#999" d="M0 0h5L2.500 4.500z" /></Svg>
            </div>
          </div>
        </div>
      </div>
    </div>
  );
}

/* ---------- Browser ---------- */
const Keycloak = ({ grey }) => <Svg s={16}><path fill="#5a5a5a" d="M5 1h10l5 9-5 9H5l-5-9z" /><path fill="#dcdcdc" d="M1 5.500h18.500v9H1z" /><path stroke={grey ? "#777" : "#00b8e3"} strokeWidth="2.300" d="M8.500 4.500 5.500 10l3 5.500M11.500 4.500l3 5.500-3 5.500" /></Svg>;
const Angular = ({ id }) => <Svg s={17}><defs><linearGradient id={id} x1="0" y1=".6" x2="1" y2="0"><stop stopColor="#ff1a7a" /><stop offset=".5" stopColor="#f02cc8" /><stop offset="1" stopColor="#7a1cff" /></linearGradient></defs><path fill={`url(#${id})`} d="M8 .500 1 3.500l1 11zM12 .500l7 3-1 11zM10 4.500l5 10.500h-2.700l-.8-2h-3l-.8 2H5zM10 8.500 9.200 11h1.600z" /><path fill="#ff1f5a" d="m5 16 1-.5h8l1 .5-5 4z" /></Svg>;
const Canva = () => <div className="flex h-4 w-4 items-center justify-center rounded-full bg-[linear-gradient(150deg,#00c4cc_25%,#5a5cf0_60%,#7d2ae8)] font-['Liberation_Serif',serif] text-[13px] leading-none text-white italic">C</div>;
const Gpt = () => <Svg s={16}><rect width="20" height="20" rx="3" fill="#fff" /><g stroke="#333" strokeWidth="1"><ellipse cx="10" cy="10" rx="7" ry="3.500" /><ellipse cx="10" cy="10" rx="7" ry="3.500" transform="rotate(60 10 10)" /><ellipse cx="10" cy="10" rx="7" ry="3.500" transform="rotate(120 10 10)" /></g></Svg>;
const Medium = () => <div className="h-4 w-4 overflow-hidden rounded-sm bg-black pl-0.5 font-['Liberation_Serif',serif] text-[13px] leading-4 font-bold text-white">Me</div>;

const TABS = [
  [<Keycloak />, "Keycloak Administ", 97, true],
  [<Angular id="ng1" />, "HealthApp", 56],
  [<Canva />, "Modelos", 46],
  [<Keycloak grey />, "localhost", 48],
  [<Angular id="ng2" />, "HealthApp", 56],
  [<Gpt />, "ChatGPT", 46],
  [<Keycloak />, "Keycloak Administ", 97, true],
  [<Medium />, "Integrating Keyclo", 97, true],
  [<Angular id="ng3" />, "HealthApp", 56, false, true],
  [<Angular id="ng4" />, "HealthApp", 56],
];

function Chromebar() {
  return (
    <div className="h-[87px] shrink-0 border-b border-[#5a5a5a] bg-[linear-gradient(180deg,#1c1c1c_0px,#1c1c1c_38px,#030303_70px)]">
      <div className="flex h-[42px] items-center pl-1.5 text-[12.500px] text-[#c9c9c9]">
        <div className="mr-[7px] flex h-[26px] w-[27px] shrink-0 items-center justify-center rounded-lg bg-[#202020] text-white"><ChevronDown size={13} strokeWidth={3} /></div>
        {TABS.map(([icon, t, w, fade, on], i) => (
          <div key={i} className={"mr-[6.120px] flex w-[160px] shrink-0 items-center rounded-lg pl-2 " + (on ? "mt-1 h-[34px] rounded-b-none bg-gradient-to-b from-[#454545] to-[#222] pb-1 text-white" : "h-[26px] bg-[#202020]")}>
            <div className="flex w-4 justify-center">{icon}</div>
            <div className={"ml-2 w-[98px] overflow-hidden " + (fade ? "[mask-image:linear-gradient(to_right,black_75%,transparent)]" : "")}>
              <Fit w={w}>{t}</Fit>
            </div>
            <X size={14} strokeWidth={2.200} className="ml-2" />
          </div>
        ))}
        <div className="ml-0.5 flex h-[26px] w-[26px] items-center justify-center rounded-lg bg-[#202020]"><Plus size={15} /></div>
        <Minus size={13} strokeWidth={2} className="ml-auto text-white" />
        <Copy size={12} strokeWidth={2.200} className="ml-[34px] -scale-x-100 text-white" />
        <X size={16} strokeWidth={1.700} className="mr-[15px] ml-8 text-white" />
      </div>
      <div className="mt-1 flex h-[34px] items-center pl-[14px] text-white">
        <ArrowLeft size={16} strokeWidth={2.400} />
        <ArrowRight size={16} strokeWidth={2.400} className="ml-5 text-[#6b6b6b]" />
        <RotateCw size={15} strokeWidth={2.500} className="ml-5" />
        <House size={16} strokeWidth={2.300} className="ml-[21px]" />
        <div className="ml-[18px] flex h-[34px] w-[1373px] shrink-0 items-center rounded-full bg-[#333] pl-[5px]">
          <div className="flex h-6 w-6 items-center justify-center rounded-full bg-[#1c1c1c]"><Info size={15} strokeWidth={2.200} /></div>
          <Fit w={56} className="ml-2 text-[13.500px]">localhost</Fit>
          <Fit w={103} className="text-[13.500px] text-[#9b9b9b]">:4200/reembolso</Fit>
          <Svg s={18} className="ml-auto" stroke="#b0b0b0" strokeWidth="1.800"><circle cx="6" cy="10" r="4.500" /><circle cx="6" cy="10" r="1" fill="#b0b0b0" /><path d="M10.500 8.500H19V12h-2v2.500h-3V12h-3.500" /></Svg>
          <Svg s={18} className="ml-3.5"><path fill="#9c9c9c" d="M1 1h9l4 14H3a2 2 0 0 1-2-2z" /><path stroke="#9c9c9c" strokeWidth="1.500" d="M11 5h8v14h-8l-1.500-4M12 9h6M15 8v1c0 3-2 4.500-3 5M13 10c1 2 2.500 3.500 4 4" /><text x="2.500" y="11" fontSize="9" fontWeight="700" fill="#333" fontFamily="Inter, sans-serif">G</text></Svg>
          <Star size={17} strokeWidth={2} className="mr-[14px] ml-3.5 text-[#b0b0b0]" />
        </div>
        <Svg s={18} className="ml-[18px]"><path fill="#e2761b" d="m1 1 7 4h4l7-4v7l-1 4 1 4-2 3-5-1-2 2-2-2-5 1-2-3 1-4-1-4z" /><path fill="#8a4a1c" d="m1 1 6 4-3 3zM19 1l-6 4 3 3z" /><path fill="#f5b27a" d="m5 9 3 1-1 2zM15 9l-3 1 1 2z" /><path fill="#e8e0d8" d="m7 15 3 1 3-1-1.500 4h-3z" /></Svg>
        <Svg s={18} className="ml-[18px]"><path fill="#ab9ff2" d="M1 15C2 8 6 2 13 2c5 0 7 3.500 5.500 7.500-1.500 4-3.500 5-5 4-1.500 4-5 5-6 2.500C5 20 .5 20 1 15z" /><ellipse cx="12.500" cy="7" rx=".9" ry="1.400" fill="#222" /><ellipse cx="16" cy="7" rx=".9" ry="1.400" fill="#222" /></Svg>
        <Svg s={18} className="ml-[18px]"><rect x="4" y="1" width="12" height="18" rx="6" fill="#eee" /><circle cx="10" cy="13" r="4" fill="#f07c2a" /></Svg>
        <Svg s={18} className="ml-[18px]"><rect x="1" y="2" width="18" height="16" rx="1.500" stroke="#ccc" strokeWidth="1.500" /><path fill="#fff" d="M3.500 4.500h13v11h-13z" /><path fill="#111" d="M10 9h5.500v5H10z" /></Svg>
        <Svg s={18} className="ml-[18px]"><path stroke="#3d5af0" strokeWidth="2.500" d="m4.500 17 5-6" /><path stroke="#0c0c18" strokeWidth="4" d="m10 10 6-7" /></Svg>
        <div className="ml-[18px] flex h-[18px] w-[18px] items-center justify-center rounded-sm bg-[#3c3c3c] font-['Liberation_Serif',serif] text-[13px] leading-none font-bold italic">f?</div>
        <Svg s={20} className="ml-[17px]"><path stroke="#fff" strokeWidth="2" strokeLinejoin="round" d="M3 5h5V3h4v2h4v4h2v3.500h-2V18H3v-4l2-2-2-2.500z" /></Svg>
        <div className="ml-4 h-4 w-0.5 bg-[#333]" />
        <Download size={19} strokeWidth={2.300} className="ml-[17px]" />
        <div className="ml-[10px] flex h-[34px] w-[34px] items-center justify-center rounded-full bg-[#242424]">
          <div className="h-5 w-5 overflow-hidden rounded-full bg-[#d8b898]"><Svg s={20}><path fill="#8fa8b8" d="M14 0h6v20h-6z" /><circle cx="12" cy="5.500" r="2.500" fill="#3a2820" /><path fill="#14161a" d="M8 20c-1-7 0-11 4-12 4 1 4 6 3.500 12z" /></Svg></div>
        </div>
        <EllipsisVertical size={18} strokeWidth={2.800} className="ml-2.5" />
      </div>
    </div>
  );
}

function Sidebar() {
  return (
    <div className="mt-[3px] ml-[3px] w-[250px] shrink-0 bg-[linear-gradient(180deg,#9ee9ff_30%,#869fff_70%)] text-black shadow-[2px_0_3px_rgba(0,0,0,0.12)]">
      <div className="flex items-center pt-[35px] pl-10">
        <Fit w={124} className="font-[Inter,sans-serif] text-[20px] leading-[24px] font-semibold">REEMBOLSO</Fit>
        <div className="ml-[26px] flex w-6 flex-col gap-1.5"><i className="h-0.5 rounded bg-[#111]" /><i className="h-0.5 rounded bg-[#111]" /><i className="h-0.5 rounded bg-[#111]" /></div>
      </div>
      <div className="mt-[61px] flex h-6 items-center pl-5">
        <Svg s={20} stroke="#111" strokeWidth="1.500" strokeLinejoin="round" className="-mt-0.5"><path d="M2.500 6H17a1.800 1.800 0 0 1 1.800 1.800V17A1.800 1.800 0 0 1 17 18.800H3A1.800 1.800 0 0 1 1.200 17V7.500C1.200 6 1.500 5.500 3 5L15.500.800V6" /><circle cx="14.500" cy="12.500" r=".8" fill="#111" /></Svg>
        <Fit w={78} className="ml-[10px] text-[15.500px]">Reembolso</Fit>
        <ChevronDown size={19} strokeWidth={2.600} className="-mt-4 ml-[72px]" />
      </div>
      <div className="mt-3 pl-5"><Fit w={26} className="text-[15.500px] leading-6">Sair</Fit></div>
    </div>
  );
}

const COLS = "grid grid-cols-[160px_155px_215px_143px_151px_198px_480px_122px]";
const HEADS = [["Funcionario", 92], ["Valor", 41], ["Empresa", 67], ["Status", 52], ["Nota Fiscal", 88], ["Pedido Médico", 116], ["Observações", 105], ["Ações", 49]];
const ROWS = [
  ["R$ 125", 51, "Drogaria LTDA", "Pendente"],
  ["R$ 2900", 63, "Drogaria LTDA", "Pendente"],
  ["R$ 236", 54, "Drogaria LTDA", "Pendente"],
  ["R$ 150", 52, "Blue Fit", "Pendente"],
  ["R$ 125.25", 75, "Drogaria LTDA", "Aprovado"],
  ["R$ 123", 52, "Drogaria LTDA", "Rejeitado", "Nota fiscal no nome de outra pessoa"],
];
const TONE = { Pendente: ["bg-[#f97316]", 55], Aprovado: ["bg-[#22c55e]", 56], Rejeitado: ["bg-[#ef4444]", 54] };
const Eye = () => <Svg s={16} stroke="#374151" strokeWidth="1.700" strokeLinejoin="round"><path d="M1 10c3-4.800 6-6.300 9-6.300s6 1.500 9 6.300c-3 4.800-6 6.300-9 6.300S4 14.800 1 10z" /><circle cx="10" cy="10" r="3" /></Svg>;
const EyeBtn = () => (
  <div className="mt-2 ml-2 flex h-7 w-[72px] items-center justify-center rounded-[3px] border border-[#b4bccb] bg-[#f0f1f4] shadow-sm"><Eye /></div>
);

function Table() {
  return (
    <div className="ml-1.5 w-[1624px] shrink-0 font-[Inter,sans-serif] text-[16px] text-[#5c6470] [font-feature-settings:'cv11']">
      <div className="flex h-[123px] justify-center pt-[31px]">
        <Fit w={187} className="font-['Open_Sans',sans-serif] text-[31px] leading-[42px] font-bold text-[#434a5c]">REEMBOLSO</Fit>
      </div>
      <div className="h-20 border-t border-[#e4e6ea] bg-[#f9fafc] pt-4 pl-4">
        <div className="flex h-[47px] w-[235px] items-center rounded-md border border-[#cfd4db] bg-white pl-[11px]">
          <Svg s={17} stroke="#6b7280" strokeWidth="1.600"><circle cx="8.500" cy="8.500" r="7" /><path d="m13.500 14 5 5" /></Svg>
          <Fit w={76} className="ml-[13px] pt-0.5 font-['Open_Sans',sans-serif] text-[15px] text-[#6b7280]">Pesquisar...</Fit>
        </div>
      </div>
      <div className={COLS + " h-[26px] items-center border-y border-[#e4e6ea] bg-[#f9fafc] font-semibold text-[#343b48]"}>
        {HEADS.map(([t, w]) => <Fit key={t} w={w} className="justify-self-start">{t}</Fit>)}
      </div>
      {ROWS.map(([val, vw, emp, stt, obs], i) => (
        <div key={i} className={COLS + " items-start border-b border-[#e4e6ea] leading-[40px] " + (i === 5 ? "h-[49px]" : "h-[45px]")}>
          <Fit w={42} className="ml-2 justify-self-start">paulo</Fit>
          <Fit w={vw} className="ml-[7px] justify-self-start">{val}</Fit>
          <Fit w={emp === "Blue Fit" ? 56 : 109} className="ml-2 justify-self-start">{emp}</Fit>
          <div className={"mt-[9px] ml-2 flex h-[26px] items-center justify-self-start rounded-md px-1.5 text-[12.500px] leading-none font-medium text-white " + TONE[stt][0]}>
            <Fit w={TONE[stt][1]}>{stt}</Fit>
          </div>
          <EyeBtn />
          <EyeBtn />
          <div className="leading-6">{obs && <Fit w={280}>{obs}</Fit>}</div>
          <div className="-ml-px flex h-7 w-[72px] items-center justify-center rounded bg-[#00d1b2] text-[#1d3b38]"><SquarePen size={18} strokeWidth={1.900} /></div>
        </div>
      ))}
      <div className="flex h-[70px] items-center border-b border-[#f0f1f3] pl-[529px] text-[#6f7680]">
        <Fit w={230} className="-mt-0.5">Mostrando 1 a 6 de 6 registros</Fit>
        <ChevronsLeft size={18} strokeWidth={1.700} className="ml-[26px] text-[#a0a5ad]" />
        <ChevronLeft size={16} strokeWidth={1.700} className="ml-[31px] text-[#a0a5ad]" />
        <span className="-mt-0.5 ml-8 w-4 text-center">1</span>
        <ChevronRight size={16} strokeWidth={1.700} className="ml-8 text-[#a0a5ad]" />
        <ChevronsRight size={18} strokeWidth={1.700} className="ml-[31px] text-[#a0a5ad]" />
        <div className="ml-[23px] flex h-12 w-[80px] items-center rounded-md border border-[#d1d5db] pl-3 text-[#4b5563]">
          <Fit w={18} className="pt-px">10</Fit>
          <ChevronDown size={18} strokeWidth={1.700} className="-mt-0.5 ml-[14px]" />
        </div>
      </div>
    </div>
  );
}

function Browser() {
  return (
    <div className="flex h-[1032px] w-[1920px] flex-col bg-white">
      <Chromebar />
      <div className="flex min-h-0 flex-1">
        <Sidebar />
        <Table />
        <div className="ml-[3px] flex w-[17px] shrink-0 flex-col items-center bg-[#f0f0f0] pt-[7px]">
          <Svg s={8} vb={8}><path fill="#a3a3a3" d="M0 6l4-4 4 4z" /></Svg>
          <Svg s={8} vb={8} className="mt-auto"><path fill="#a3a3a3" d="M0 2l4 4 4-4z" /></Svg>
        </div>
        <div className="flex w-[17px] shrink-0 flex-col items-center bg-[#f0f0f0] pt-[7px]">
          <Svg s={8} vb={8}><path fill="#a3a3a3" d="M0 6l4-4 4 4z" /></Svg>
          <div className="mt-0.5 h-[905px] w-[13px] bg-[#c1c1c1]" />
          <Svg s={8} vb={8} className="mt-2.5"><path fill="#505050" d="M0 2l4 4 4-4z" /></Svg>
        </div>
      </div>
    </div>
  );
}

export default function App() {
  return (
    <div className="flex h-[1080px] w-[3286px] overflow-hidden bg-black font-['Open_Sans',sans-serif]">
      <div className="w-[1366px] shrink-0">
        <Outlook />
        <div className={BAR}>
          <div className="w-[243.500px] shrink-0 pt-1 pl-[22px]"><Weather /></div>
          <Cell Icon={WinIcon} />
          <Cell Icon={() => <Svg s={24} vb={24} stroke="#2b2b2b" strokeWidth="2"><circle cx="10.500" cy="10.500" r="8.500" fill="#f3e6e2" /><path strokeWidth="2.500" d="m17 17 5.500 5.500" /></Svg>} />
          <AppCells />
          <div className="mr-[22px] ml-auto flex flex-col items-end pt-[7px] leading-4">
            <Fit w={29}>17:47</Fit>
            <Fit w={62}>20/09/2024</Fit>
          </div>
        </div>
      </div>
      <div className="w-[1920px] shrink-0">
        <Browser />
        <div className={BAR}>
          <div className="flex w-[430px] shrink-0 pt-1 pl-5">
            <Weather />
            <div className="ml-0.5 flex flex-col items-start pt-[3px] leading-4">
              <Fit w={25} className="text-[#222]">30°C</Fit>
              <Fit w={59}>Ensolarado</Fit>
            </div>
          </div>
          <Cell Icon={WinIcon} />
          <div className="mt-2 mr-[3px] ml-1 flex h-[31px] w-[217px] shrink-0 items-center rounded-full border border-[#d9c8c4] bg-[#f9f3f1] pl-2.5">
            <Search size={16} strokeWidth={2.400} className="text-[#222]" />
            <Fit w={58} className="ml-[9px] text-[13.500px] text-[#5c5454]">Pesquisar</Fit>
            <div className="ml-auto flex h-[27px] w-[51px] items-center justify-center rounded-full bg-[#e8e3e2]">
              <Svg s={22} vb={22}><path stroke="#4a2c10" strokeWidth="2" d="M8 5V2.500h6V5" /><rect y="4.500" width="22" height="16" rx="2" fill="#dd8a0a" /><path fill="#8a4a0c" d="M0 15h22v3.500a2 2 0 0 1-2 2H2a2 2 0 0 1-2-2z" /><path fill="#ffd94a" d="M9.500 10h3v4h-3z" /></Svg>
            </div>
          </div>
          <AppCells />
          <div className="flex h-12 flex-1 items-center pb-0.5 text-[#222]">
            <ChevronUp size={15} strokeWidth={2.200} className="ml-[135px]" />
            <BellOff size={17} strokeWidth={1.900} className="ml-4" />
            <div className="ml-[18px] flex w-6 flex-col items-center leading-4"><Fit w={22}>POR</Fit><Fit w={20}>PTB</Fit></div>
            <Wifi size={17} strokeWidth={2.200} className="ml-[16px]" />
            <Volume1 size={17} strokeWidth={1.700} className="ml-[7px]" />
            <Svg s={18} className="ml-[7px]" stroke="#222" strokeWidth="1.500"><rect x="4" y="6" width="13" height="10" rx="1.500" /><path fill="#222" d="M10 8.500h5v5h-5zM18.500 9v4M5 2 2 8h3l-1 4" /></Svg>
            <div className="mr-[6px] ml-auto flex flex-col items-end leading-4"><Fit w={29}>17:47</Fit><Fit w={62}>20/09/2024</Fit></div>
            <Bell size={16} fill="#0a4fb0" stroke="#0a4fb0" className="mr-5" />
          </div>
        </div>
      </div>
    </div>
  );
}
